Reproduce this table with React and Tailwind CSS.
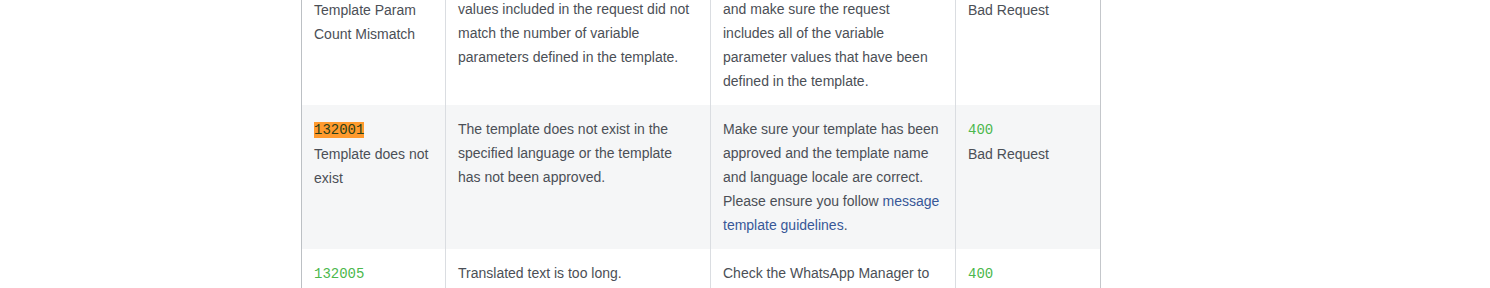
import React from 'react';

const rows = [
  {
    code: '132000',
    name: 'Template Param Count Mismatch',
    desc: 'The number of variable parameter values included in the request did not match the number of variable parameters defined in the template.',
    fix: (
      <>
        Check the template definition<br />
        and make sure the request<br />
        includes all of the variable<br />
        parameter values that have been<br />
        defined in the template.
      </>
    ),
    status: 'Bad Request',
  },
  {
    code: '132001',
    highlight: true,
    name: 'Template does not exist',
    desc: 'The template does not exist in the specified language or the template has not been approved.',
    fix: (
      <>
        Make sure your template has been approved and the template name and language locale are correct. Please ensure you follow{' '}
        <a href="#" className="text-[#385898]">message template guidelines</a>.
      </>
    ),
    status: 'Bad Request',
  },
  {
    code: '132005',
    name: 'Translated text too long',
    desc: 'Translated text is too long.',
    fix: <>Check the WhatsApp Manager to verify that your template has been translated.</>,
    status: 'Bad Request',
  },
];

const Code = ({ children, highlight }) => (
  <code
    className={
      highlight
        ? "font-['Liberation_Mono','Courier_New',monospace] text-[14px] bg-[#ff9a2e] text-[#2b3f18]"
        : "font-['Liberation_Mono','Courier_New',monospace] text-[14px] text-[#4cb84c]"
    }
  >
    {children}
  </code>
);

const ErrorTable = () => {
  return (
    <table className="table-fixed border-collapse w-[799px] border-l border-l-[#bcc0c4] border-r border-r-[#c4c7cb]">
      <colgroup>
        <col className="w-[144px]" />
        <col className="w-[265px]" />
        <col className="w-[245px]" />
        <col className="w-[145px]" />
      </colgroup>
      <tbody>
        {rows.map((r, i) => (
          <tr key={r.code} className={i % 2 === 1 ? 'bg-[#f5f6f7]' : 'bg-white'}>
            <td className="align-top px-3 py-3 border-r border-[#dadde1]">
              <Code highlight={r.highlight}>{r.code}</Code>
              <br />
              {r.name}
            </td>
            <td className="align-top px-3 py-3 border-r border-[#dadde1]">{r.desc}</td>
            <td className="align-top px-3 py-3 border-r border-[#dadde1]">{r.fix}</td>
            <td className="align-top px-3 py-3">
              <Code>400</Code>
              <br />
              {r.status}
            </td>
          </tr>
        ))}
      </tbody>
    </table>
  );
};

export default function App() {
  return (
    <div className="w-[1490px] h-[288px] overflow-hidden bg-white">
      <div className="pl-[301px] -mt-[39px] font-['Liberation_Sans',Arial,sans-serif] text-[14px] leading-[24px] text-[#4b4f56]">
        <ErrorTable />
      </div>
    </div>
  );
}
